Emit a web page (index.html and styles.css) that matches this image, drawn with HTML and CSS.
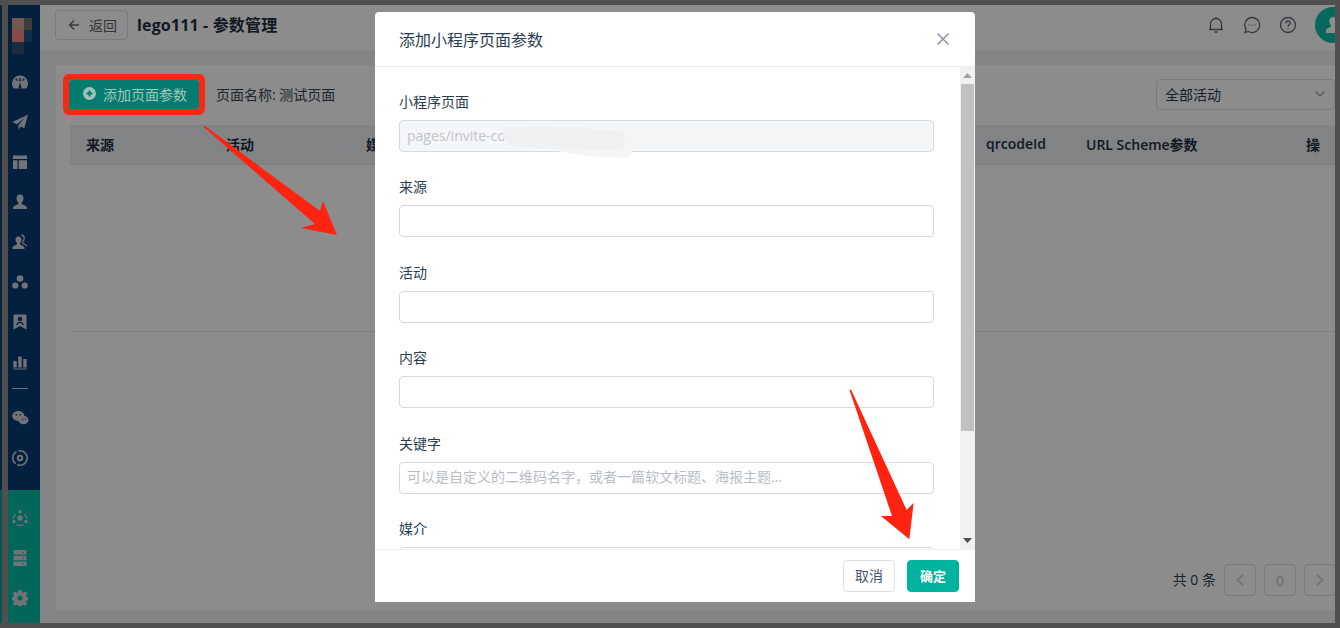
FILE: index.html
```html
<!DOCTYPE html>
<html lang="zh">
<head>
<meta charset="utf-8">
<title>参数管理</title>
<link rel="stylesheet" href="styles.css">
</head>
<body>
<div class="shell">
  <div class="edge"></div>
  <div class="app">
    <aside class="sidebar">
      <div class="nav-top">
        <div class="logo"><i class="l1"></i><i class="l2"></i><i class="l3"></i><i class="l4"></i><i class="l5"></i></div>
        <div class="nav-item"><svg width="16" height="16" viewBox="0 0 16 16"><path class="ic" d="M8 1.500a8 8 0 0 0-8 8c0 1.900.6 3.400 1.500 5h13c.9-1.600 1.500-3.100 1.500-5a8 8 0 0 0-8-8z"/><path class="cut" d="M7.300 4h1.400v3.500h-1.400zM3.300 5.300l1-1 1.600 2-1 .8zM12.700 5.300l-1-1-1.600 2 1 .8zM6.500 14.500l1-5h1l1 5z"/></svg></div>
        <div class="nav-item"><svg width="16" height="16" viewBox="0 0 16 16"><path class="ic" d="M16 .8.300 8l4.500 2.200L13 3.500 6.500 11l.2 4.500 2.300-3 3.300 1.800z"/></svg></div>
        <div class="nav-item"><svg width="16" height="16" viewBox="0 0 16 16"><path class="ic" d="M1 1.500h14v3.500H1zM1 6.200h4.500v8.800H1zM6.700 6.200H15v8.800H6.700z"/></svg></div>
        <div class="nav-item"><svg width="16" height="16" viewBox="0 0 16 16"><path class="ic" d="M8 .5c2.200 0 3.500 1.700 3.500 3.800 0 1.800-.8 3.300-1.800 4.200v1.200c0 .8 5.300 1.600 5.300 4v1.300H1v-1.300c0-2.400 5.300-3.200 5.300-4V8.500c-1-.9-1.800-2.400-1.800-4.200C4.500 2.200 5.800.5 8 .5z"/></svg></div>
        <div class="nav-item"><svg width="16" height="16" viewBox="0 0 16 16"><path class="ic" d="M6.500 2.500c1.900 0 3 1.500 3 3.300 0 1.500-.7 2.800-1.500 3.500v1c0 .7 4.500 1.400 4.500 3.400v1.300H.500v-1.300c0-2 4.500-2.700 4.500-3.400v-1C4.200 8.600 3.500 7.300 3.500 5.800c0-1.800 1.100-3.300 3-3.300z"/><path class="line" d="M9.500 1c1.800.3 2.700 1.700 2.700 3.300 0 1.600-.7 2.800-1.500 3.500v1.400c0 .7 4 1.200 4 3.300"/></svg></div>
        <div class="nav-item"><svg width="16" height="16" viewBox="0 0 16 16"><circle class="ic" cx="8" cy="4.500" r="3.300"/><circle class="ic" cx="3.300" cy="11.500" r="3.100"/><circle class="ic" cx="12.700" cy="11.500" r="3.100"/></svg></div>
        <div class="nav-item"><svg width="16" height="16" viewBox="0 0 16 16"><path class="ic" d="M1.500.5h13v15L8 12l-6.500 3.500z"/><circle class="cut" cx="8" cy="5" r="2.300"/><path class="cut" d="M4.200 11c.3-2.400 1.900-3.200 3.800-3.200s3.500.8 3.800 3.200l-1.100.6C10.400 10 9.400 9 8 9s-2.400 1-2.700 2.600z"/></svg></div>
        <div class="nav-item"><svg width="16" height="16" viewBox="0 0 16 16"><path class="ic" d="M1.300 7h3.400v6.500H1.300zM6.300 2.500h3.400v11H6.300zM11.300 5h3.400v8.500h-3.400zM1.300 14.600h13.400v1H1.300z"/></svg></div>
        <div class="nav-rule"></div>
        <div class="nav-item"><svg width="17" height="16" viewBox="0 0 17 16"><ellipse class="ic" cx="6.300" cy="6" rx="6" ry="5"/><ellipse class="ic" cx="11.500" cy="10" rx="5" ry="4.300"/><path class="cut" d="M3.500 4h1.500v1.500H3.500zM7.500 4H9v1.500H7.500zM10 8.500h1.200v1.200H10zM13 8.500h1.200v1.200H13z"/></svg></div>
        <div class="nav-item"><svg width="16" height="16" viewBox="0 0 16 16"><circle class="disc" cx="8" cy="8" r="7.200"/><circle class="ic" cx="8" cy="8" r="3.200"/><circle class="cut" cx="8" cy="8" r="1.300"/></svg></div>
      </div>
      <div class="nav-bottom">
        <div class="nav-item"><svg width="16" height="16" viewBox="0 0 16 16"><circle class="ic" cx="8" cy="8" r="2.700"/><circle class="ic" cx="8" cy="1.800" r="1.700"/><circle class="ic" cx="2" cy="11.500" r="1.700"/><circle class="ic" cx="14" cy="11.500" r="1.700"/><path class="line" d="M3.500 4.500A6.800 6.800 0 0 0 1.300 8M12.500 4.500A6.800 6.800 0 0 1 14.700 8M4.500 14.500a7 7 0 0 0 7 0"/></svg></div>
        <div class="nav-item"><svg width="14" height="16" viewBox="0 0 14 16"><path class="ic" d="M.5 0h13v4.500H.5zM.5 5.700h13v4.500H.5zM.5 11.400h13V16H.5z"/><path class="cut-g" d="M9.500 1.700h1.500v1.200H9.500zM9.500 7.400h1.500v1.200H9.500zM9.500 13.100h1.500v1.200H9.500z"/></svg></div>
        <div class="nav-item"><svg width="16" height="16" viewBox="0 0 16 16"><path class="ic" d="M6.500 0h3l.4 2.200 1.300.6 1.900-1.300 2.100 2.100-1.300 1.900.6 1.300 2 .4v3l-2 .4-.6 1.300 1.300 1.900-2.100 2.100-1.900-1.300-1.300.6-.4 2.200h-3l-.4-2.200-1.300-.6-1.900 1.300-2.100-2.100 1.300-1.900-.6-1.300-2-.4v-3l2-.4.6-1.300L.9 3.500 3 1.400l1.900 1.300 1.300-.6z"/><circle class="cut-g" cx="8" cy="8" r="2.500"/></svg></div>
      </div>
    </aside>
    <main class="main">
      <header class="topbar">
        <div class="back"><svg width="12" height="12" viewBox="0 0 12 12"><path class="thin" d="M11 6H1.500M6 1.500 1.500 6 6 10.500"/></svg><span>返回</span></div>
        <h1 class="title">lego111 - 参数管理</h1>
        <div class="top-icons">
          <svg width="18" height="18" viewBox="0 0 18 18"><path class="thin" d="M3.500 13.500V8a5.500 5.500 0 0 1 11 0v5.500zM2 13.500h14M7.500 16h3M9 1v1.500"/></svg>
          <svg width="18" height="18" viewBox="0 0 18 18"><path class="thin" d="M9 1.500a7.500 7.500 0 1 1-3.600 14L2 16.500l1-3.400A7.500 7.500 0 0 1 9 1.500z"/><path class="dots" d="M5.500 8.400h1.200v1.200H5.500zM8.400 8.400h1.200v1.200H8.400zM11.300 8.400h1.200v1.200h-1.200z"/></svg>
          <svg width="18" height="18" viewBox="0 0 18 18"><circle class="thin" cx="9" cy="9" r="7.500"/><path class="thin" d="M6.800 7.200C6.800 5.800 7.800 5 9 5s2.300.8 2.300 2.100c0 1.700-2.300 1.800-2.300 3.600"/><path class="dots" d="M8.400 12.200h1.200v1.200H8.400z"/></svg>
          <div class="avatar"><svg width="14" height="16" viewBox="0 0 14 16"><path class="av" d="M7 0c2.400 0 3.700 1.800 3.700 4 0 1.800-.8 3.300-1.700 4.200v1.200c0 .8 5 1.500 5 4.100V16H0v-2.500c0-2.600 5-3.300 5-4.100V8.200C4.100 7.300 3.300 5.800 3.300 4 3.300 1.800 4.600 0 7 0z"/></svg></div>
        </div>
      </header>
      <section class="content">
        <div class="card">
          <div class="toolbar">
            <div class="ring"><button class="add-btn"><svg width="13" height="13" viewBox="0 0 13 13"><circle class="plus-bg" cx="6.500" cy="6.500" r="6.500"/><path class="plus" d="M6.500 3.500v6M3.500 6.500h6"/></svg><span>添加页面参数</span></button></div>
            <span class="page-name">页面名称: 测试页面</span>
            <div class="select"><span>全部活动</span><svg width="10" height="6" viewBox="0 0 10 6"><path class="thin-light" d="M.5.5 5 5 9.500.5"/></svg></div>
          </div>
          <div class="table-head">
            <span>来源</span><span>活动</span><span>媒</span><span>qrcodeId</span><span>URL Scheme参数</span><span>操</span>
          </div>
          <div class="table-body"></div>
          <div class="pager">
            <span class="total">共 0 条</span>
            <span class="pg"><svg width="8" height="12" viewBox="0 0 8 12"><path class="faint" d="M7 1 1.500 6 7 11"/></svg></span>
            <span class="pg">0</span>
            <span class="pg"><svg width="8" height="12" viewBox="0 0 8 12"><path class="faint" d="M1 1l5.500 5L1 11"/></svg></span>
          </div>
        </div>
      </section>
    </main>
    <div class="dim"></div>
  </div>
</div>

<div class="modal">
  <div class="modal-head">
    <span>添加小程序页面参数</span>
    <svg width="14" height="14" viewBox="0 0 14 14"><path class="close" d="M1.500 1.500l11 11M12.500 1.500l-11 11"/></svg>
  </div>
  <div class="modal-body">
    <form class="form">
      <div class="field"><label>小程序页面</label><input class="input" disabled value="pages/invite-co"></div>
      <div class="field"><label>来源</label><input class="input"></div>
      <div class="field"><label>活动</label><input class="input"></div>
      <div class="field"><label>内容</label><input class="input"></div>
      <div class="field"><label>关键字</label><input class="input" placeholder="可以是自定义的二维码名字，或者一篇软文标题、海报主题..."></div>
      <div class="field"><label>媒介</label><input class="input"></div>
    </form>
    <div class="scrollbar">
      <svg width="9" height="5" viewBox="0 0 9 5"><path class="arrow-up" d="M4.500 0 9 5H0z"/></svg>
      <div class="thumb"></div>
      <svg width="9" height="5" viewBox="0 0 9 5"><path class="arrow-down" d="M0 0h9L4.500 5z"/></svg>
    </div>
  </div>
  <div class="modal-foot">
    <button class="btn">取消</button>
    <button class="btn primary">确定</button>
  </div>
</div>

<svg class="marks" width="1340" height="628" viewBox="0 0 1340 628">
  <path class="smear-out" d="M600 146L629 135Q635 148 630 157Q590 159 558 151z"/>
  <path class="smear" d="M504 128Q560 124 622 132Q628 142 622 150L560 149L514 147Q499 140 504 128z"/>
  <path class="red" d="M203 126.500 205 126 320 211 323 201 337 235 301 228 315 224z"/>
  <path class="red" d="M849.500 390 851 389.500 906.700 510 913.700 502.700 909.300 539.300 881 516 892 516z"/>
</svg>
</body>
</html>
```

FILE: styles.css
```css
* { box-sizing: border-box; }
html, body { margin: 0; padding: 0; }
body {
  width: 1340px;
  height: 628px;
  overflow: hidden;
  position: relative;
  background: #4f4f4f;
  font-family: "Open Sans", "Noto Sans CJK SC", sans-serif;
  font-size: 14px;
  color: #1f2d3d;
}
.shell { display: flex; height: 628px; padding: 5px 5px 5px 0; }
.edge {
  width: 2px;
  margin-right: 6px;
  background: linear-gradient(#0a2440 0, #0a2440 485px, #04584f 485px);
}
.app { position: relative; flex: 1; display: flex; overflow: hidden; }
.dim { position: absolute; inset: 0; background: rgba(0, 0, 0, .45); z-index: 1; }

/* sidebar */
.sidebar {
  width: 32px;
  flex: none;
  display: flex;
  flex-direction: column;
  background: #0a3a71;
}
.nav-top { flex: 1; }
.logo { display: grid; grid-template-columns: 12px 8px; grid-template-rows: repeat(3, 12px); margin: 13px 0 0 4px; height: 44px; }
.logo i { display: block; }
.l1 { background: #cca592; }
.l2 { background: #706f72; }
.l3 { background: #f88884; }
.l4 { background: #18558a; }
.l5 { background: #305170; }
.nav-item { height: 40px; width: 24px; display: flex; align-items: center; justify-content: center; }
.nav-rule { height: 1px; width: 16px; margin: 6px 0 9px 4px; background: #c8d0d8; }
.nav-bottom { height: 133px; padding-top: 8px; background: #04bba7; }
.ic { fill: #ccd2d9; }
.cut { fill: #0a3a71; }
.cut-g { fill: #04bba7; }
.line { fill: none; stroke: #ccd2d9; stroke-width: 1.300; }
.disc { fill: none; stroke: #ccd2d9; stroke-width: 1.600; stroke-dasharray: 14 2; }

/* main */
.main { flex: 1; min-width: 0; display: flex; flex-direction: column; background: #eff1f3; }
.topbar { height: 45px; flex: none; display: flex; align-items: center; background: #fff; padding: 0 0 5px 15px; }
.back {
  width: 73px; height: 30px;
  display: flex; align-items: center;
  border: 1px solid #dcdfe6; border-radius: 4px;
  padding: 0 0 1px 12px; gap: 9px;
  color: #606266;
}
.thin { fill: none; stroke: #606a76; stroke-width: 1.300; }
.thin-light { fill: none; stroke: #909aa5; stroke-width: 1.200; }
.dots { fill: #606a76; }
.title { margin: 0 0 0 9px; font-size: 16px; font-weight: 700; line-height: 22px; letter-spacing: .15px; }
.top-icons { margin-left: auto; display: flex; align-items: center; gap: 18px; }
.avatar {
  width: 36px; height: 36px; border-radius: 50%;
  background: #0dbfa9; margin: 0 -16px 0 0;
  display: flex; align-items: center; justify-content: center;
  flex: none;
}
.av { fill: #fff; }
.content { flex: 1; min-height: 0; padding: 15px 0 13px 16px; display: flex; }
.card { flex: 1; min-width: 0; background: #fff; padding: 9px 0 0 7px; overflow: hidden; }
.toolbar { display: flex; align-items: center; height: 41px; }
.ring { position: relative; z-index: 2; border: 6px solid #f62a14; border-radius: 6px; width: 142px; height: 41px; }
.add-btn {
  display: flex; align-items: center; gap: 7px;
  width: 130px; height: 29px; padding: 0 0 2px 14px;
  border: 0; border-radius: 2px;
  background: #067c70; color: #a1c6bf;
  font: inherit;
  white-space: nowrap;
}
.plus-bg { fill: #9cc2bb; }
.plus { stroke: #067c70; stroke-width: 2; fill: none; }
.page-name { margin-left: 11px; padding-bottom: 2px; color: #3a4450; }
.select {
  margin-left: auto; width: 179px; height: 31px;
  border: 1px solid #dcdfe6; border-radius: 4px;
  display: flex; align-items: center; justify-content: space-between;
  padding: 0 9px 2px 8px; color: #2b3a4c;
}
.table-head {
  margin: 10px 0 0 7px; height: 40px;
  display: grid; grid-template-columns: 140px 140px 620px 100px 220px 1fr;
  align-items: center;
  padding: 0 0 2px 16px;
  background: #eceef1;
  border-bottom: 1px solid #dfe3e8;
  font-weight: 600;
  white-space: nowrap;
}
.table-body { margin-left: 7px; height: 167px; border-bottom: 1px solid #e8ebee; border-bottom-left-radius: 4px; }
.pager { display: flex; align-items: center; justify-content: flex-end; gap: 8px; margin: 232px -1px 0 0; }
.total { padding-bottom: 3px; color: #2f3d4c; }
.pg {
  width: 32px; height: 32px; border: 1px solid #dcdfe6; border-radius: 4px;
  display: flex; align-items: center; justify-content: center;
  color: #c0c4cc;
}
.faint { fill: none; stroke: #c0c4cc; stroke-width: 1.200; }

/* modal */
.modal {
  position: absolute; left: 375px; top: 12px; z-index: 3;
  width: 600px; height: 590px;
  background: #fff; border-radius: 4px;
  display: flex; flex-direction: column;
}
.modal-head {
  height: 55px; flex: none;
  display: flex; align-items: center; justify-content: space-between;
  padding: 0 25px 0 24px;
  border-bottom: 1px solid #e9ecef;
  font-size: 16px; color: #2b3d52;
}
.close { stroke: #8a97a6; stroke-width: 1.500; fill: none; }
.modal-body { flex: 1; min-height: 0; display: flex; }
.form { flex: 1; min-width: 0; overflow: hidden; padding: 23.900px 26px 0 24px; }
.field { padding-bottom: 24.500px; }
.field label { display: block; height: 22px; line-height: 22px; margin-bottom: 7px; color: #2b3d52; }
.input {
  display: block; width: 100%; height: 32px;
  padding: 0 7px 2px;
  border: 1px solid #d5dbe2; border-radius: 4px;
  background: #fff; outline: 0;
  font: inherit; color: #2b3d52;
}
.input:disabled { background: #f5f6f7; color: #c0c4cc; padding-bottom: 0; }
.input::placeholder { color: #b9bec6; opacity: 1; }
.scrollbar {
  width: 15px; flex: none; background: #f1f1f1;
  display: flex; flex-direction: column; align-items: center;
  padding-top: 6px;
}
.arrow-up { fill: #a3a3a3; }
.arrow-down { fill: #505050; }
.thumb { width: 13px; height: 347px; margin: 6px 0 107px; background: #c1c1c1; }
.modal-foot {
  height: 53px; flex: none;
  display: flex; align-items: center; justify-content: flex-end; gap: 12px;
  padding: 0 16px 0 0;
  border-top: 1px solid #eef0f2;
  background: #fff;
}
.btn {
  width: 52px; height: 32px; padding: 0 0 2px;
  border: 1px solid #dcdfe6; border-radius: 4px;
  background: #fff; color: #44566c;
  font: inherit;
}
.primary { background: #00b39f; border-color: #00b39f; color: #fff; font-weight: 700; font-size: 13px; }

/* annotations */
.marks { position: absolute; left: 0; top: 0; z-index: 4; pointer-events: none; }
.red { fill: #ff2412; }
.smear { fill: #eef0f1; }
.smear-out { fill: #f4f6f6; }
```
